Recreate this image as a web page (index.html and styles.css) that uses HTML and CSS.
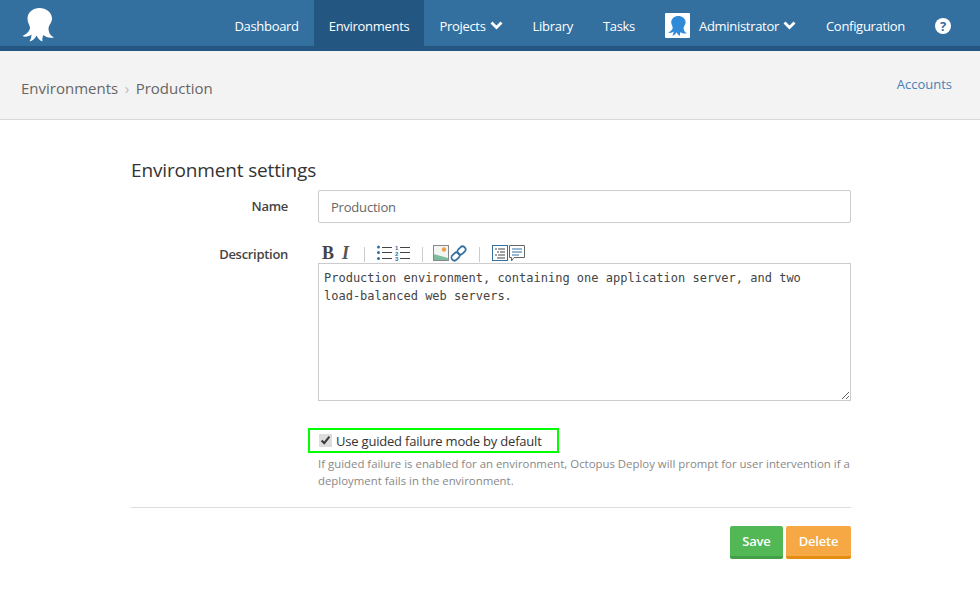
FILE: index.html
```html
<!DOCTYPE html>
<html lang="en">
<head>
    <meta charset="UTF-8">
    <meta name="viewport" content="width=device-width, initial-scale=1.0">
    <title>Environment settings</title>
    <link rel="stylesheet" href="styles.css">
</head>
<body>
    <header class="topbar">
        <a class="logo" href="#">
            <svg width="34" height="34" viewBox="0 0 34 34"><path class="octo-white" d="M17.500 0C11 0 5.500 4.500 5.500 10.500C5.500 14.500 7.500 16.500 8 19.500C8.300 23 4 26.500 0.500 28C3 29.500 7 28.500 9.500 26.500C9.500 29 8.500 31.500 7.500 33.500C10.500 33 13 30.500 14.500 27.500C15.500 30 17.500 32.500 20.500 33.500C20 31 20.500 29 21.500 27C23.500 29 27 30.500 32 29.500C29 28 26.500 25 26.500 20.500C26.800 17 30 14.500 30 10.500C30 4.500 24 0 17.500 0Z"/></svg>
        </a>
        <nav class="mainnav">
            <a href="#">Dashboard</a>
            <a href="#" class="active">Environments</a>
            <a href="#">Projects <svg class="chev" width="13" height="9" viewBox="0 0 13 9"><path d="M1.500 1.500L6.500 6.500L11.500 1.500" /></svg></a>
            <a href="#">Library</a>
            <a href="#">Tasks</a>
            <a href="#" class="user">
                <span class="avatar"><svg width="20" height="20" viewBox="0 0 34 34"><path class="octo-blue" d="M17.500 0C11 0 5.500 4.500 5.500 10.500C5.500 14.500 7.500 16.500 8 19.500C8.300 23 4 26.500 0.500 28C3 29.500 7 28.500 9.500 26.500C9.500 29 8.500 31.500 7.500 33.500C10.500 33 13 30.500 14.500 27.500C15.500 30 17.500 32.500 20.500 33.500C20 31 20.500 29 21.500 27C23.500 29 27 30.500 32 29.500C29 28 26.500 25 26.500 20.500C26.800 17 30 14.500 30 10.500C30 4.500 24 0 17.500 0Z"/></svg></span>
                Administrator <svg class="chev" width="13" height="9" viewBox="0 0 13 9"><path d="M1.500 1.500L6.500 6.500L11.500 1.500" /></svg>
            </a>
            <a href="#">Configuration</a>
            <a href="#" class="help"><span class="help-dot">?</span></a>
        </nav>
    </header>

    <div class="subbar">
        <div class="crumbs">
            <a href="#">Environments</a>
            <span class="sep">&#8250;</span>
            <a href="#">Production</a>
        </div>
        <a class="accounts" href="#">Accounts</a>
    </div>

    <main class="content">
        <h2>Environment settings</h2>
        <form>
            <div class="row row-name">
                <label for="envName">Name</label>
                <div class="field">
                    <input type="text" id="envName" value="Production">
                </div>
            </div>
            <div class="row row-desc">
                <label for="envDesc">Description</label>
                <div class="field">
                    <div class="toolbar">
                        <span class="tool-b">B</span>
                        <span class="tool-i">I</span>
                        <span class="tool-sep"></span>
                        <svg width="34" height="16" viewBox="0 0 34 16">
                            <g fill="#336f9f"><circle cx="1.500" cy="2" r="1.500"/><circle cx="1.500" cy="7.500" r="1.500"/><circle cx="1.500" cy="13.500" r="1.500"/></g>
                            <path d="M5 2.500H15M5 7.500H15M5 13.500H15M23 2.500H33M23 7.500H33M23 13.500H33" stroke="#444" stroke-width="1"/>
                            <g fill="#336f9f" font-family="Liberation Sans, sans-serif" font-size="6" font-weight="bold"><text x="18" y="5">1</text><text x="18" y="10.500">2</text><text x="18" y="16">3</text></g>
                        </svg>
                        <span class="tool-sep tight"></span>
                        <svg width="35" height="17" viewBox="0 0 35 17">
                            <rect x="0.500" y="0.500" width="15" height="15" fill="#f2f5f2" stroke="#888"/>
                            <path d="M1 15V9.500C5 9.500 10 12 15 13V15Z" fill="#7dbb9d"/>
                            <circle cx="11" cy="4.500" r="2.200" fill="#e8a34a"/>
                            <g fill="none" stroke="#336f9f" stroke-width="1.700">
                                <rect x="18" y="8.500" width="9" height="6" rx="3" transform="rotate(-45 22.500 11.500)"/>
                                <rect x="24" y="2.500" width="9" height="6" rx="3" transform="rotate(-45 28.500 5.500)"/>
                            </g>
                        </svg>
                        <span class="tool-sep"></span>
                        <svg width="33" height="17" viewBox="0 0 33 17">
                            <rect x="0.500" y="0.500" width="15" height="15" fill="#fff" stroke="#336f9f"/>
                            <path d="M3 4H5M6 4H13M5 7H7M8 7H13M3 10H5M6 10H13M5 13H13" stroke="#444" stroke-width="1"/>
                            <path d="M17.500 0.500H32.500V12.500H22L19.500 16V12.500H17.500Z" fill="#fff" stroke="#666"/>
                            <path d="M20 4H30M20 7H30M20 10H27" stroke="#336f9f" stroke-width="1"/>
                        </svg>
                    </div>
                    <textarea id="envDesc">Production environment, containing one application server, and two load-balanced web servers.</textarea>
                </div>
            </div>
            <div class="row row-check">
                <div class="field">
                    <label class="check-box"><input type="checkbox" checked> Use guided failure mode by default</label>
                    <p class="hint">If guided failure is enabled for an environment, Octopus Deploy will prompt for user intervention if a deployment fails in the environment.</p>
                </div>
            </div>
            <div class="actions">
                <button type="button" class="btn btn-save">Save</button>
                <button type="button" class="btn btn-delete">Delete</button>
            </div>
        </form>
    </main>
</body>
</html>
```

FILE: styles.css
```css
* {
    box-sizing: border-box;
}
body {
    font-family: "Open Sans", sans-serif;
    font-size: 13px;
    color: #333;
    background-color: white;
    margin: 0;
}
a {
    text-decoration: none;
}
.topbar {
    display: flex;
    justify-content: space-between;
    height: 51px;
    background-color: #336f9f;
    border-bottom: 5px solid #235782;
}
.logo {
    margin-left: 22px;
    padding-top: 8px;
}
.octo-white {
    fill: white;
}
.octo-blue {
    fill: #2f8bd8;
}
.mainnav {
    display: flex;
    margin-right: 14px;
}
.mainnav a {
    display: flex;
    align-items: center;
    gap: 4px;
    padding: 5px 15px 0;
    color: white;
    letter-spacing: -0.3px;
}
.mainnav a.active {
    background-color: #235782;
}
.chev {
    fill: none;
    stroke: white;
    stroke-width: 2.800;
}
.avatar {
    display: flex;
    align-items: center;
    justify-content: center;
    width: 25px;
    height: 25px;
    margin-right: 5px;
    background-color: white;
    border-radius: 1px;
}
.help-dot {
    display: block;
    width: 16px;
    height: 16px;
    border-radius: 50%;
    background-color: white;
    color: #336f9f;
    font-size: 13px;
    font-weight: bold;
    line-height: 16px;
    text-align: center;
}
.subbar {
    display: flex;
    justify-content: space-between;
    height: 69px;
    padding: 0 28px 0 21px;
    background-color: #f3f3f3;
    border-bottom: 1px solid #d8d8d8;
}
.crumbs {
    display: flex;
    align-items: center;
    gap: 6.500px;
    padding-top: 6px;
    font-size: 15px;
}
.crumbs a {
    color: #666;
}
.sep {
    color: #bbb;
}
.accounts {
    margin-top: 24px;
    color: #4a7fb5;
}
.content {
    width: 720px;
    margin-left: 131px;
}
h2 {
    margin: 37px 0 7px;
    font-size: 19px;
    font-weight: normal;
    line-height: 26px;
    letter-spacing: -0.15px;
    color: #333;
}
.row {
    display: flex;
}
.row > label {
    width: 157px;
    font-weight: 600;
    text-align: right;
    letter-spacing: -0.3px;
    color: #444;
}
.row .field {
    width: 533px;
    margin-left: 30px;
}
.row-name {
    height: 33px;
}
.row-name label {
    padding-top: 7px;
}
.row-desc {
    margin-top: 20px;
}
.row-desc label {
    padding-top: 2px;
}
input[type="text"] {
    width: 100%;
    height: 33px;
    padding: 0 12px;
    border: 1px solid #ccc;
    border-radius: 2px;
    font-family: "Open Sans", sans-serif;
    font-size: 13px;
    letter-spacing: -0.2px;
    color: #666;
}
.toolbar {
    display: flex;
    align-items: center;
    height: 20px;
    padding-left: 4px;
}
.tool-b {
    font-family: "Liberation Serif", serif;
    font-size: 18px;
    font-weight: bold;
    color: #444;
}
.tool-i {
    margin-left: 8px;
    margin-right: 4px;
    font-family: "Liberation Serif", serif;
    font-size: 18px;
    font-style: italic;
    font-weight: bold;
    color: #555;
}
.tool-sep {
    width: 1px;
    height: 15px;
    margin: 3px 12px 0 11px;
    background-color: #ccc;
}
.tool-sep.tight {
    margin-right: 10px;
}
textarea {
    display: block;
    width: 100%;
    height: 138px;
    padding: 5px 20px 5px 5px;
    border: 1px solid #ccc;
    font-family: "DejaVu Sans Mono", monospace;
    font-size: 12px;
    line-height: 18px;
    color: #444;
}
.row-check {
    margin-top: 27px;
    margin-left: 187px;
}
.row-check .field {
    margin-left: 0;
}
.check-box {
    display: flex;
    align-items: center;
    gap: 4px;
    width: 251px;
    height: 25px;
    margin-left: -10px;
    padding-left: 9px;
    border: 2px solid #00ff00;
    font-weight: 500;
    letter-spacing: -0.2px;
    color: #333;
}
.check-box input {
    margin: 0;
    accent-color: #ddd;
}
.hint {
    margin: 2px 0 0;
    font-size: 11.400px;
    line-height: 17px;
    color: #888;
}
.actions {
    display: flex;
    justify-content: flex-end;
    gap: 3px;
    margin-top: 18px;
    padding-top: 18px;
    border-top: 1px solid #ddd;
}
.btn {
    height: 33px;
    padding: 0 12px;
    border: none;
    border-radius: 2px;
    font-family: "Open Sans", sans-serif;
    font-size: 13px;
    font-weight: 600;
    letter-spacing: -0.2px;
    color: white;
}
.btn-save {
    width: 53px;
    background-color: #52b855;
    border-bottom: 3px solid #43a047;
}
.btn-delete {
    width: 65px;
    background-color: #f5a843;
    border-bottom: 3px solid #e58c12;
}
```
